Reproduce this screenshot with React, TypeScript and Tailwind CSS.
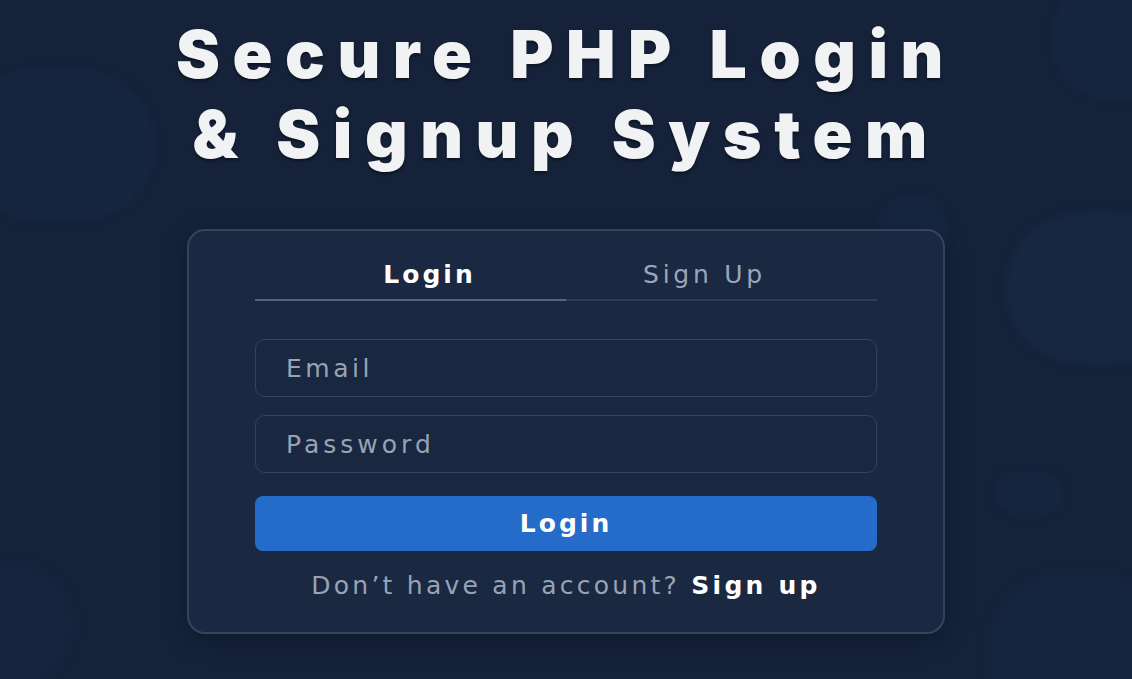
import { useState } from 'react'

type Tab = 'login' | 'signup'

export default function App() {
  const [tab, setTab] = useState<Tab>('login')
  const [email, setEmail] = useState('')
  const [password, setPassword] = useState('')

  return (
    <div className="relative h-[679px] w-full overflow-hidden bg-[#15223a] font-['DejaVu_Sans',sans-serif]">
      {/* soft background blobs */}
      <div className="pointer-events-none absolute -left-[40px] top-[70px] h-[150px] w-[195px] rounded-full bg-[#172640] blur-[3px]" />
      <div className="pointer-events-none absolute -left-[60px] top-[560px] h-[130px] w-[135px] rounded-full bg-[#16243e] blur-[3px]" />
      <div className="pointer-events-none absolute left-[1052px] -top-[25px] h-[125px] w-[150px] rounded-full bg-[#172640] blur-[3px]" />
      <div className="pointer-events-none absolute left-[1005px] top-[212px] h-[152px] w-[190px] rounded-full bg-[#172741] blur-[3px]" />
      <div className="pointer-events-none absolute left-[995px] top-[473px] h-[40px] w-[68px] rounded-full bg-[#172640] blur-[3px]" />
      <div className="pointer-events-none absolute left-[985px] top-[572px] h-[160px] w-[190px] rounded-full bg-[#16253f] blur-[3px]" />
      <div className="pointer-events-none absolute left-[878px] top-[195px] h-[70px] w-[70px] rounded-full bg-[#172640] blur-[3px]" />

      <div className="relative flex flex-col items-center">
        <h1 className="mt-[14px] flex flex-col items-center text-center font-['Inter',sans-serif] text-[66px] font-black leading-[80px] tracking-[0.19em] text-[#f1f2f4] [text-shadow:0_2px_3px_rgba(0,0,0,0.45)]">
          <span>Secure PHP Login</span>
          <span>&amp; Signup System</span>
        </h1>

        <div className="mt-[55px] w-[758px] rounded-[18px] border-2 border-[#34445f] bg-[#1a2841] px-[66px] pb-[31px] pt-[27px] shadow-[0_6px_24px_rgba(0,0,0,0.25)]">
          <div className="grid grid-cols-2">
            <button
              onClick={() => setTab('login')}
              className={`border-b-2 pb-[7px] pl-[38px] text-[25px] leading-[34px] tracking-[0.12em] ${tab === 'login' ? 'border-[#56657f] font-bold text-white' : 'border-[#2e3c54] text-[#9aa6b8]'}`}
            >
              Login
            </button>
            <button
              onClick={() => setTab('signup')}
              className={`border-b-2 pb-[7px] pr-[34px] text-[25px] leading-[34px] tracking-[0.15em] ${tab === 'signup' ? 'border-[#56657f] font-bold text-white' : 'border-[#2e3c54] text-[#9aa6b8]'}`}
            >
              Sign Up
            </button>
          </div>

          <form className="mt-[38px] flex flex-col" onSubmit={(e) => e.preventDefault()}>
            <input
              type="email"
              value={email}
              onChange={(e) => setEmail(e.target.value)}
              placeholder="Email"
              className="h-[58px] w-full rounded-[10px] border border-[#34435b] bg-[#1a2740] px-[30px] text-[25px] tracking-[0.14em] text-white outline-none placeholder:text-[#98a3b5]"
            />
            <input
              type="password"
              value={password}
              onChange={(e) => setPassword(e.target.value)}
              placeholder="Password"
              className="mt-[18px] h-[58px] w-full rounded-[10px] border border-[#34435b] bg-[#1a2740] px-[30px] text-[25px] tracking-[0.16em] text-white outline-none placeholder:text-[#98a3b5]"
            />
            <button
              type="submit"
              className="mt-[23px] h-[55px] w-full rounded-[8px] bg-[#256bc9] text-[25px] font-bold tracking-[0.12em] text-white"
            >
              {tab === 'login' ? 'Login' : 'Sign Up'}
            </button>
          </form>

          <p className="mt-[20px] text-center text-[25px] leading-[30px] tracking-[0.13em] text-[#98a3b5]">
            Don&rsquo;t have an account?{' '}
            <a href="#" className="font-bold text-white" onClick={(e) => { e.preventDefault(); setTab('signup') }}>
              Sign up
            </a>
          </p>
        </div>
      </div>
    </div>
  )
}
